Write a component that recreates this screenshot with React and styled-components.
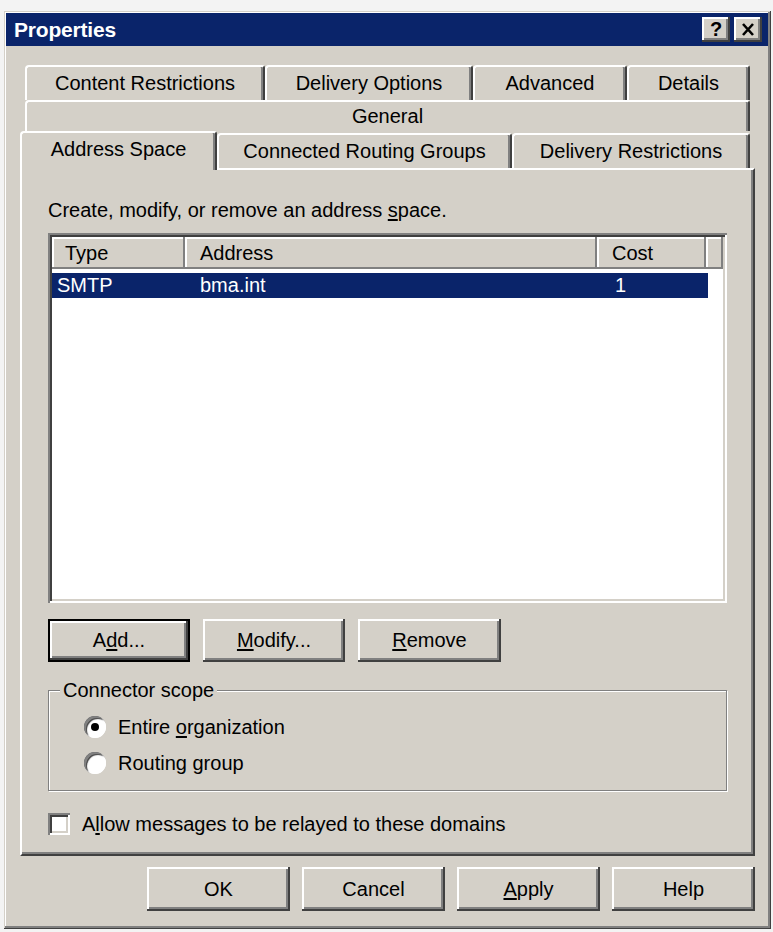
import React from "react";
import styled, { createGlobalStyle, css } from "styled-components";

const FACE = "#d4d0c8";
const SHADOW = "#808080";
const DARK = "#404040";
const LIGHT = "#ffffff";
const NAVY = "#0a246a";

const GlobalStyle = createGlobalStyle`
  html, body { margin: 0; padding: 0; background: #f3f3f3; }
  body {
    font-family: "Liberation Sans", Arial, sans-serif;
    font-size: 20px;
    color: #000;
  }
  * { box-sizing: border-box; }
`;

const raised = css`
  box-shadow: inset -2px -2px 0 ${DARK}, inset 2px 2px 0 ${LIGHT},
    inset -4px -4px 0 ${SHADOW};
`;

const sunken = css`
  box-shadow: inset 2px 2px 0 ${SHADOW}, inset -2px -2px 0 ${LIGHT},
    inset 4px 4px 0 ${DARK}, inset -4px -4px 0 ${FACE};
`;

const Screen = styled.div`
  padding: 11px 2px 4px 4px;
`;

const Window = styled.div`
  width: 767px;
  background: ${FACE};
  padding: 2px 3px 3px 2px;
  display: flex;
  flex-direction: column;
  box-shadow: inset -1px -1px 0 ${DARK}, inset 1px 1px 0 ${FACE},
    inset -3px -3px 0 ${SHADOW}, inset 2px 2px 0 ${LIGHT};
`;

const TitleBar = styled.div`
  height: 33px;
  background: ${NAVY};
  display: flex;
  align-items: center;
  justify-content: space-between;
  padding: 0 6px 0 8px;
`;

const Title = styled.span`
  color: #fff;
  font-weight: bold;
  font-size: 21px;
  letter-spacing: -0.2px;
`;

const CaptionButtons = styled.div`
  display: flex;
  gap: 4px;
`;

const CaptionButton = styled.div`
  width: 28px;
  height: 25px;
  background: ${FACE};
  ${raised};
  display: flex;
  align-items: center;
  justify-content: center;
  font-weight: bold;
  font-size: 20px;
  padding-bottom: 1px;
`;

const Body = styled.div`
  padding: 19px 13px 15px 14px;
  display: flex;
  flex-direction: column;
`;

const TabStrip = styled.div`
  display: flex;
  flex-direction: column;
`;

const TabRow = styled.div`
  display: flex;
  align-items: flex-end;
  padding-left: ${(p) => p.$indent}px;
`;

const Tab = styled.div`
  width: ${(p) => p.$w}px;
  height: ${(p) => p.$h}px;
  background: ${FACE};
  border-top: 2px solid ${LIGHT};
  border-left: 2px solid ${LIGHT};
  border-right: 2px solid ${DARK};
  box-shadow: inset -2px 0 0 ${SHADOW};
  border-top-left-radius: 4px;
  border-top-right-radius: 3px;
  display: flex;
  align-items: center;
  justify-content: center;
  white-space: nowrap;
  font-size: 20px;
  ${(p) =>
    p.$selected &&
    css`
      position: relative;
      z-index: 2;
      margin-bottom: -2px;
      padding-bottom: 4px;
    `}
`;

const Panel = styled.div`
  background: ${FACE};
  border-top: 2px solid ${LIGHT};
  border-left: 2px solid ${LIGHT};
  border-right: 2px solid ${DARK};
  border-bottom: 2px solid ${DARK};
  box-shadow: inset -2px -2px 0 ${SHADOW};
  padding: 28px 26px 19px 26px;
  display: flex;
  flex-direction: column;
`;

const Description = styled.div`
  line-height: 24px;
  margin-bottom: 11px;
`;

const Mn = styled.span`
  text-decoration: underline;
  text-underline-offset: 2px;
  text-decoration-thickness: 1.5px;
`;

const ListView = styled.div`
  height: 370px;
  background: #fff;
  ${sunken};
  padding: 4px;
  display: flex;
  flex-direction: column;
`;

const HeaderRow = styled.div`
  display: flex;
  height: 32px;
`;

const HeaderCell = styled.div`
  width: ${(p) => (p.$w ? `${p.$w}px` : "auto")};
  flex: ${(p) => (p.$w ? "none" : "1")};
  background: ${FACE};
  box-shadow: inset -2px -2px 0 ${SHADOW}, inset 2px 2px 0 ${LIGHT};
  padding-left: ${(p) => p.$pad || 0}px;
  display: flex;
  align-items: center;
`;

const Rows = styled.div`
  padding-top: 4px;
`;

const Row = styled.div`
  display: grid;
  grid-template-columns: 133px 412px 111px;
  width: 656px;
  height: 25px;
  align-items: center;
  background: ${(p) => (p.$selected ? NAVY : "transparent")};
  color: ${(p) => (p.$selected ? "#fff" : "#000")};
`;

const Cell = styled.div`
  padding-left: ${(p) => p.$pad}px;
  white-space: nowrap;
`;

const ButtonRow = styled.div`
  display: flex;
  gap: ${(p) => p.$gap}px;
  justify-content: ${(p) => p.$justify || "flex-start"};
  margin-top: ${(p) => p.$top}px;
`;

const Button = styled.button`
  width: ${(p) => p.$w}px;
  height: ${(p) => p.$h}px;
  font: inherit;
  font-size: 20px;
  color: #000;
  background: ${FACE};
  border: none;
  padding: 0;
  ${raised};
  ${(p) =>
    p.$default &&
    css`
      box-shadow: inset 0 0 0 2px #000, inset -4px -4px 0 ${DARK},
        inset 4px 4px 0 ${LIGHT}, inset -6px -6px 0 ${SHADOW};
    `}
`;

const Group = styled.fieldset`
  margin: 16px 0 0;
  padding: 7px 11px 9px;
  border: 1px solid ${SHADOW};
  box-shadow: inset 1px 1px 0 ${LIGHT}, 1px 1px 0 ${LIGHT};
  display: flex;
  flex-direction: column;
`;

const Legend = styled.legend`
  padding: 0 3px;
  background: ${FACE};
  line-height: 24px;
`;

const OptionRow = styled.label`
  display: flex;
  align-items: center;
  gap: 12px;
  height: ${(p) => p.$h}px;
  margin-left: ${(p) => p.$indent || 0}px;
`;

const Radio = styled.span`
  width: 22px;
  height: 22px;
  border-radius: 50%;
  background: #fff;
  box-shadow: inset 2px 2px 0 ${SHADOW}, inset -2px -2px 0 ${LIGHT},
    inset 3px 3px 1px ${DARK};
  display: flex;
  align-items: center;
  justify-content: center;
  &::after {
    content: "";
    width: 8px;
    height: 8px;
    border-radius: 50%;
    background: ${(p) => (p.$checked ? "#000" : "transparent")};
  }
`;

const Checkbox = styled.span`
  width: 22px;
  height: 22px;
  background: #fff;
  ${sunken};
`;

const CheckRow = styled(OptionRow)`
  margin-top: 22px;
`;

const topTabs = [
  ["Content Restrictions", 240],
  ["Delivery Options", 208],
  ["Advanced", 154],
  ["Details", 123],
];

const CloseGlyph = () => (
  <svg width="14" height="13" viewBox="0 0 14 13">
    <path d="M2 1 L12 12 M12 1 L2 12" stroke="#000" strokeWidth="2.6" fill="none" />
  </svg>
);

export default function App() {
  return (
    <>
      <GlobalStyle />
      <Screen>
        <Window>
          <TitleBar>
            <Title>Properties</Title>
            <CaptionButtons>
              <CaptionButton>?</CaptionButton>
              <CaptionButton>
                <CloseGlyph />
              </CaptionButton>
            </CaptionButtons>
          </TitleBar>
          <Body>
            <TabStrip>
              <TabRow $indent={5}>
                {topTabs.map(([label, w]) => (
                  <Tab key={label} $w={w} $h={35}>
                    {label}
                  </Tab>
                ))}
              </TabRow>
              <TabRow $indent={5}>
                <Tab $w={725} $h={31}>General</Tab>
              </TabRow>
              <TabRow $indent={0}>
                <Tab $w={197} $h={39} $selected>
                  Address Space
                </Tab>
                <Tab $w={295} $h={35}>Connected Routing Groups</Tab>
                <Tab $w={238} $h={35}>Delivery Restrictions</Tab>
              </TabRow>
            </TabStrip>
            <Panel>
              <Description>
                Create, modify, or remove an address <Mn>s</Mn>pace.
              </Description>
              <ListView>
                <HeaderRow>
                  <HeaderCell $w={133} $pad={13}>Type</HeaderCell>
                  <HeaderCell $w={412} $pad={15}>Address</HeaderCell>
                  <HeaderCell $w={109} $pad={15}>Cost</HeaderCell>
                  <HeaderCell />
                </HeaderRow>
                <Rows>
                  <Row $selected>
                    <Cell $pad={5}>SMTP</Cell>
                    <Cell $pad={15}>bma.int</Cell>
                    <Cell $pad={18}>1</Cell>
                  </Row>
                </Rows>
              </ListView>
              <ButtonRow $gap={13} $top={16}>
                <Button $w={142} $h={43} $default>
                  A<Mn>d</Mn>d...
                </Button>
                <Button $w={142} $h={43}>
                  <Mn>M</Mn>odify...
                </Button>
                <Button $w={143} $h={43}>
                  <Mn>R</Mn>emove
                </Button>
              </ButtonRow>
              <Group>
                <Legend>Connector scope</Legend>
                <OptionRow $h={36} $indent={24}>
                  <Radio $checked />
                  <span>
                    Entire <Mn>o</Mn>rganization
                  </span>
                </OptionRow>
                <OptionRow $h={36} $indent={24}>
                  <Radio />
                  <span>Routing group</span>
                </OptionRow>
              </Group>
              <CheckRow $h={22}>
                <Checkbox />
                <span>
                  A<Mn>l</Mn>low messages to be relayed to these domains
                </span>
              </CheckRow>
            </Panel>
            <ButtonRow $gap={12} $top={11} $justify="flex-end">
              <Button $w={143} $h={44}>OK</Button>
              <Button $w={143} $h={44}>Cancel</Button>
              <Button $w={143} $h={44}>
                <Mn>A</Mn>pply
              </Button>
              <Button $w={143} $h={44}>Help</Button>
            </ButtonRow>
          </Body>
        </Window>
      </Screen>
    </>
  );
}
